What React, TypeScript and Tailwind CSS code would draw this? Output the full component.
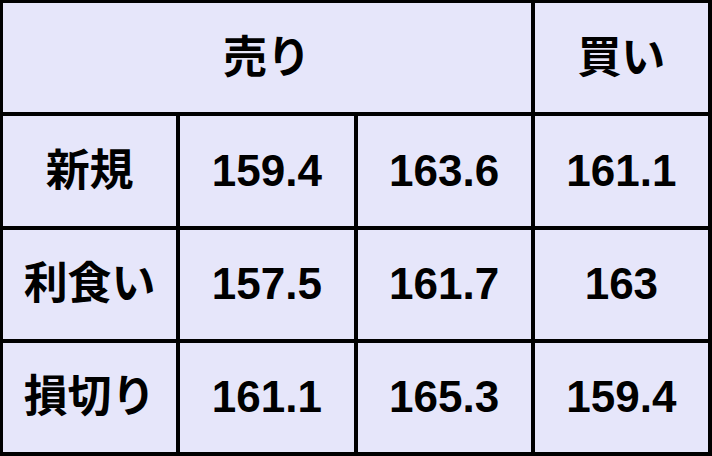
import React from 'react';

const rows: [string, string, string, string][] = [
  ['新規', '159.4', '163.6', '161.1'],
  ['利食い', '157.5', '161.7', '163'],
  ['損切り', '161.1', '165.3', '159.4'],
];

const Cell: React.FC<{ children: React.ReactNode; span?: boolean }> = ({ children, span }) => (
  <div
    className={`bg-[#e6e6fa] flex items-center justify-center text-black font-bold text-[44px] leading-none ${
      span ? 'col-span-3' : ''
    }`}
  >
    {children}
  </div>
);

export default function App() {
  return (
    <div
      className="w-[712px] h-[456px] bg-black pt-[3px] pl-[3px] pr-[4px] pb-[4px] grid grid-cols-4 grid-rows-4 gap-[4px]"
      style={{ fontFamily: '"Liberation Sans", "Noto Sans CJK JP", sans-serif' }}
    >
      <Cell span>売り</Cell>
      <Cell>買い</Cell>
      {rows.map((r) =>
        r.map((v, i) => <Cell key={r[0] + i}>{v}</Cell>)
      )}
    </div>
  );
}
